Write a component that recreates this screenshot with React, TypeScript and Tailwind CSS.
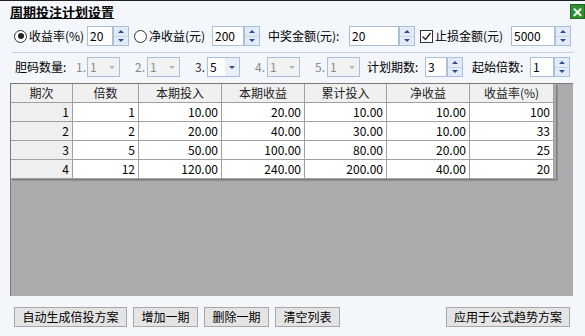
import React from 'react';

const FONT = { fontFamily: '"Noto Sans CJK SC", "Liberation Sans", sans-serif' };

function Spin() {
  return (
    <div className="flex flex-col w-[16px] h-full border border-[#a9bfdc] bg-[#e2ebf7]">
      <div className="flex-1 flex items-center justify-center border-b border-[#c5d4ea]">
        <div className="w-0 h-0 border-l-[3px] border-r-[3px] border-b-[3px] border-l-transparent border-r-transparent border-b-[#2a4f8a]" />
      </div>
      <div className="flex-1 flex items-center justify-center">
        <div className="w-0 h-0 border-l-[3px] border-r-[3px] border-t-[3px] border-l-transparent border-r-transparent border-t-[#2a4f8a]" />
      </div>
    </div>
  );
}

function NumBox({ value, w, ml = 0 }: { value: string; w: number; ml?: number }) {
  return (
    <div className="flex h-[20px]" style={{ marginLeft: ml }}>
      <div
        className="h-full border border-[#a9bfdc] bg-white text-[12px] leading-[18px] pl-[2px] text-black"
        style={{ width: w }}
      >
        {value}
      </div>
      <Spin />
    </div>
  );
}

function Combo({ label, value, enabled }: { label: string; value: string; enabled?: boolean }) {
  return (
    <>
      <span className={`w-[12px] ml-[15px] text-[12px] ${enabled ? 'text-[#333]' : 'text-[#8a8a8a]'}`}>{label}</span>
      <div
        className={`flex w-[33px] h-[20px] border border-[#a9bfdc] ${enabled ? 'bg-white text-black' : 'bg-[#f2f2f2] text-[#8a8a8a]'}`}
      >
        <span className="flex-1 pl-[2px] text-[12px] leading-[18px]">{value}</span>
        <div className={`w-[14px] flex items-center justify-center ${enabled ? 'bg-[#e8eff9]' : ''}`}>
          <div
            className={`w-0 h-0 border-l-[3px] border-r-[3px] border-t-[3px] border-l-transparent border-r-transparent ${
              enabled ? 'border-t-[#2a4f8a]' : 'border-t-[#b5b5b5]'
            }`}
          />
        </div>
      </div>
    </>
  );
}

function Btn({ children, w, ml }: { children: React.ReactNode; w: number; ml: number }) {
  return (
    <button
      className="h-[20px] border border-[#a8a8a8] bg-[#e4e4e4] text-[12px] text-black leading-[18px]"
      style={{ width: w, marginLeft: ml }}
    >
      {children}
    </button>
  );
}

const rows = [
  ['1', '1', '10.00', '20.00', '10.00', '10.00', '100'],
  ['2', '2', '20.00', '40.00', '30.00', '10.00', '33'],
  ['3', '5', '50.00', '100.00', '80.00', '20.00', '25'],
  ['4', '12', '120.00', '240.00', '200.00', '40.00', '20'],
];
const heads = ['期次', '倍数', '本期投入', '本期收益', '累计投入', '净收益', '收益率(%)'];

export default function App() {
  return (
    <div className="w-[585px] h-[336px] bg-[#f3f6fb] border-t border-[#222] overflow-hidden text-black" style={FONT}>
      {/* Title */}
      <div className="flex justify-between h-[24px]">
        <span className="ml-[10px] mt-[3px] text-[13px] font-bold underline leading-[16px]">周期投注计划设置</span>
        <div className="mt-[3px] w-[15px] h-[15px] bg-[#2f8f2f] border border-[#1e6b1e] flex items-center justify-center text-white text-[13px] font-bold leading-none">
          ✕
        </div>
      </div>

      {/* Row 1 */}
      <div className="flex items-center h-[20px] mt-[1px] text-[12px] whitespace-nowrap">
        <div className="ml-[14px] w-[13px] h-[13px] rounded-full border border-[#333] bg-white flex items-center justify-center">
          <div className="w-[6px] h-[6px] rounded-full bg-[#222]" />
        </div>
        <span className="ml-[2px] w-[56px]">收益率(%)</span>
        <NumBox value="20" w={26} ml={2} />
        <div className="ml-[5px] w-[13px] h-[13px] rounded-full border border-[#333] bg-white" />
        <span className="ml-[2px] w-[61px]">净收益(元)</span>
        <NumBox value="200" w={32} ml={2} />
        <span className="ml-[8px] w-[80px]">中奖金额(元):</span>
        <NumBox value="20" w={50} ml={1} />
        <div className="ml-[5px] w-[13px] h-[13px] border border-[#333] bg-white flex items-center justify-center">
          <svg width="11" height="11" viewBox="0 0 11 11">
            <path d="M1.5 5.5 L4.5 8.5 L9.5 2" fill="none" stroke="#222" strokeWidth="1.3" />
          </svg>
        </div>
        <span className="ml-[2px] w-[74px]">止损金额(元)</span>
        <NumBox value="5000" w={44} ml={2} />
      </div>

      {/* Separator */}
      <div className="mx-[12px] mt-[6px] h-px bg-[#c3cfe0]" />

      {/* Row 2 */}
      <div className="flex items-center h-[20px] mt-[4px] text-[12px] whitespace-nowrap">
        <span className="ml-[15px] w-[61px]">胆码数量:</span>
        <span className="w-[11px] text-[#8a8a8a]">1.</span>
        <div className="flex w-[33px] h-[20px] border border-[#a9bfdc] bg-[#f2f2f2] text-[#8a8a8a]">
          <span className="flex-1 pl-[2px] leading-[18px]">1</span>
          <div className="w-[14px] flex items-center justify-center">
            <div className="w-0 h-0 border-l-[3px] border-r-[3px] border-t-[3px] border-l-transparent border-r-transparent border-t-[#b5b5b5]" />
          </div>
        </div>
        <Combo label="2." value="1" />
        <Combo label="3." value="5" enabled />
        <Combo label="4." value="1" />
        <Combo label="5." value="1" />
        <span className="ml-[7px] w-[58px]">计划期数:</span>
        <NumBox value="3" w={22} />
        <span className="ml-[9px] w-[58px]">起始倍数:</span>
        <NumBox value="1" w={24} />
      </div>

      {/* Table area */}
      <div className="ml-[10px] mt-[6px] w-[563px] h-[213px] bg-[#ababab] border-l border-t border-[#7a7a7a]">
        <div className="w-[545px] shadow-[1px_1px_0_#7f7f7f,2px_2px_0_#8f8f8f]">
          <div className="grid grid-cols-[62px_66px_83px_83px_82px_83px_84px] text-[12px]">
            {heads.map((h) => (
              <div
                key={h}
                className="h-[19px] bg-[#f0f0f0] border-r border-b border-[#a0a0a0] text-center leading-[18px] text-[#222]"
              >
                {h}
              </div>
            ))}
            {rows.map((r) =>
              r.map((c, i) => (
                <div
                  key={r[0] + '-' + i}
                  className={`h-[19px] border-r border-b border-[#a0a0a0] text-right pr-[3px] leading-[18px] ${
                    i === 0 ? 'bg-[#efefef]' : 'bg-white'
                  }`}
                >
                  {c}
                </div>
              ))
            )}
          </div>
        </div>
      </div>

      {/* Buttons */}
      <div className="flex mt-[11px]">
        <Btn w={113} ml={14}>自动生成倍投方案</Btn>
        <Btn w={65} ml={6}>增加一期</Btn>
        <Btn w={65} ml={6}>删除一期</Btn>
        <Btn w={65} ml={6}>清空列表</Btn>
        <Btn w={124} ml={106}>应用于公式趋势方案</Btn>
      </div>
    </div>
  );
}
